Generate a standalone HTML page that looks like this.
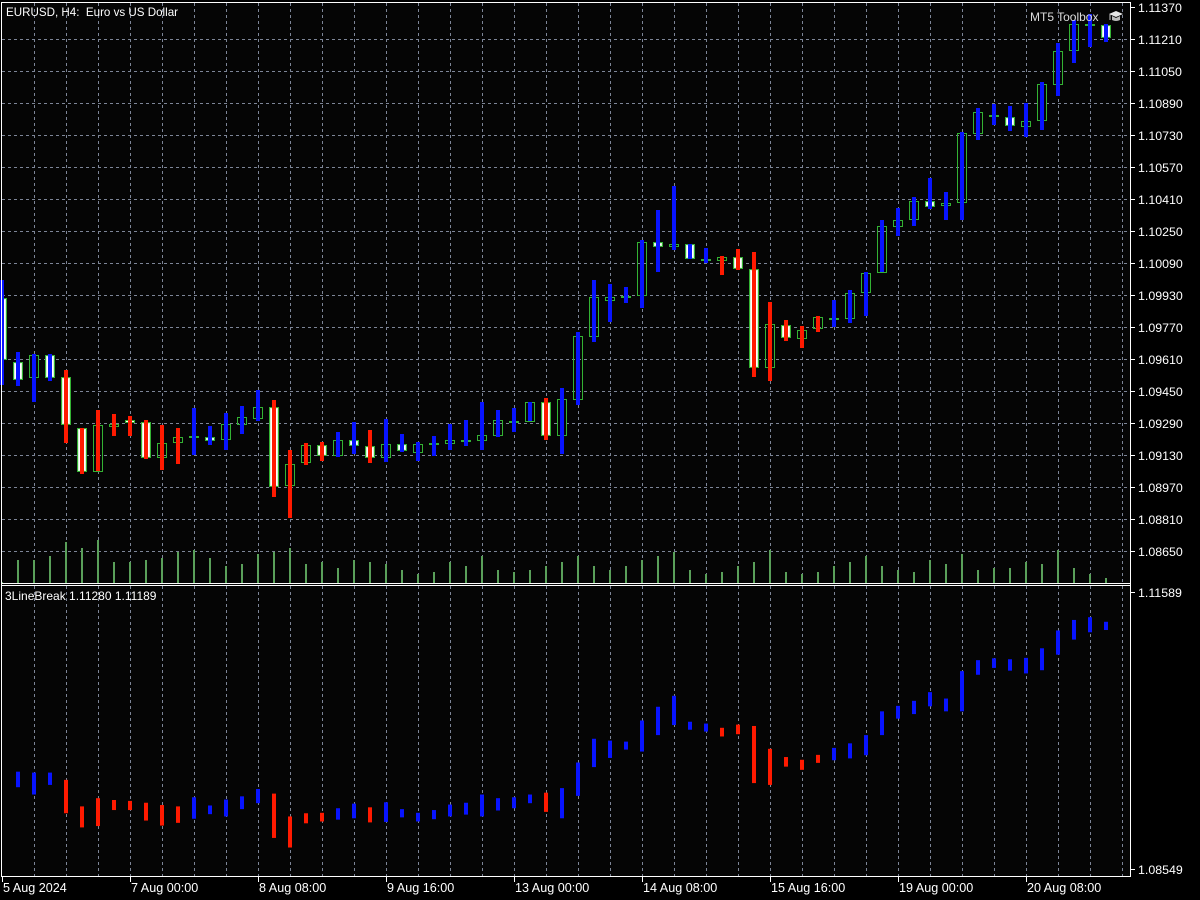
<!DOCTYPE html>
<html><head><meta charset="utf-8"><style>
html,body{margin:0;padding:0;background:#000;width:1200px;height:900px;overflow:hidden}
svg{display:block}
text{font-family:"Liberation Sans","DejaVu Sans",sans-serif;font-size:12px;fill:#fff}
</style></head><body>
<svg id="s" width="1200" height="900" viewBox="0 0 1200 900" xmlns="http://www.w3.org/2000/svg">
<rect width="1200" height="900" fill="#000"/>
<rect x="1" y="2" width="1129" height="874" fill="#050505"/>
<g id="grid"></g>
<g id="vol"></g>
<g id="cand"></g>
<g id="low"></g>
<path d="M1.5 2.5H1130.5V876.5H1.5Z" fill="none" stroke="#fff" stroke-width="1"/>
<path d="M1 583.5H1130M1 585.5H1130" stroke="#fff" stroke-width="1"/>
<g id="axis"></g>
<text x="6" y="16" style="font-size:11.6px">EURUSD, H4:&#160; Euro vs US Dollar</text>
<text x="1030" y="21" style="fill:#ddd">MT5 Toolbox</text>
<g transform="translate(1107,8)">
<path d="M2 6 L9 3 L16 6 L9 9 Z" fill="#e8e8e8"/>
<path d="M5 8 V12 Q9 14 13 12 V8 L9 10 Z" fill="#bdbdbd"/>
<path d="M3 6.5 V12" stroke="#ccc" stroke-width="1"/>
</g>
<text x="5" y="600">3LineBreak 1.11280 1.11189</text>
</svg>
<script>
var NS="http://www.w3.org/2000/svg";
function el(p,t,a,txt){var e=document.createElementNS(NS,t);for(var k in a)e.setAttribute(k,a[k]);if(txt)e.textContent=txt;document.getElementById(p).appendChild(e);return e;}
for(var m=1;m<=35;m++){var x=2+32*m+0.5;
 el('grid','line',{x1:x,y1:3,x2:x,y2:583,stroke:'#7d8597','stroke-dasharray':'3,3','stroke-width':1});
 el('grid','line',{x1:x,y1:586,x2:x,y2:876,stroke:'#7d8597','stroke-dasharray':'3,3','stroke-width':1});}
for(var n=1;n<=17;n++){var y=7+32*n+0.5;
 el('grid','line',{x1:2,y1:y,x2:1130,y2:y,stroke:'#7d8597','stroke-dasharray':'3,3','stroke-width':1});}
for(var n=0;n<=17;n++){var y=7+32*n;var p=(1.11370-0.0016*n).toFixed(5);
 el('axis','line',{x1:1130,y1:y+0.5,x2:1135,y2:y+0.5,stroke:'#fff'});
 el('axis','text',{x:1138,y:y+5,style:'font-size:12.4px'},p);}
el('axis','line',{x1:1130,y1:592.5,x2:1135,y2:592.5,stroke:'#fff'});
el('axis','text',{x:1138,y:597,style:'font-size:12.4px'},'1.11589');
el('axis','line',{x1:1130,y1:869.5,x2:1135,y2:869.5,stroke:'#fff'});
el('axis','text',{x:1138,y:874,style:'font-size:12.4px'},'1.08549');
var dl=[[2,'5 Aug 2024'],[130,'7 Aug 00:00'],[258,'8 Aug 08:00'],[386,'9 Aug 16:00'],[514,'13 Aug 00:00'],[642,'14 Aug 08:00'],[770,'15 Aug 16:00'],[898,'19 Aug 00:00'],[1026,'20 Aug 08:00']];
dl.forEach(function(d){el('axis','line',{x1:d[0]+0.5,y1:876,x2:d[0]+0.5,y2:882,stroke:'#fff'});el('axis','text',{x:d[0]+1,y:892,style:'font-size:12.6px'},d[1]);});
var D=[
[298,360,'w',280,385,'b',582],
[362,380,'w',352,386,'b',560],
[355,378,'h',354,402,'b',560],
[355,378,'w',354,381,'b',556],
[377,425,'w',370,443,'r',542],
[428,472,'w',428,474,'r',548],
[425,472,'h',410,471,'r',540],
[424,427,'h',414,436,'r',562],
[420,423,'w',416,436,'r',562],
[422,458,'w',420,459,'r',560],
[443,458,'h',425,470,'r',558],
[437,443,'h',428,464,'r',552],
[437,437,'d',408,455,'b',550],
[437,441,'w',426,445,'b',558],
[424,440,'h',413,450,'b',566],
[417,425,'h',406,434,'b',564],
[407,419,'h',390,421,'b',554],
[407,487,'w',400,497,'r',552],
[464,486,'h',450,518,'r',548],
[445,463,'h',443,465,'r',564],
[445,456,'w',442,461,'r',562],
[440,456,'h',432,457,'b',568],
[440,446,'w',422,454,'b',560],
[446,458,'w',430,463,'r',562],
[444,458,'h',419,462,'b',564],
[444,451,'w',434,452,'b',570],
[444,453,'h',442,461,'b',574],
[444,444,'d',436,456,'b',572],
[440,444,'h',424,450,'b',562],
[441,441,'d',420,446,'b',566],
[435,441,'h',402,450,'b',556],
[420,436,'h',410,437,'b',570],
[422,422,'d',408,432,'b',572],
[402,422,'h',402,421,'b',570],
[402,436,'w',398,440,'r',566],
[399,436,'h',388,454,'b',562],
[336,400,'h',332,405,'b',556],
[297,337,'h',280,342,'b',566],
[297,301,'h',284,322,'b',570],
[296,298,'h',287,303,'b',566],
[242,296,'h',240,308,'b',560],
[242,247,'w',210,272,'b',556],
[244,247,'h',186,250,'b',552],
[244,259,'w',244,259,'b',570],
[259,261,'h',248,263,'b',574],
[257,261,'h',256,275,'r',572],
[257,269,'w',249,270,'r',566],
[269,368,'w',252,377,'r',562],
[324,368,'h',302,381,'r',550],
[325,338,'w',320,341,'r',572],
[330,339,'h',326,348,'r',574],
[317,329,'h',316,332,'r',572],
[318,320,'h',300,327,'b',566],
[293,319,'h',290,323,'b',562],
[273,293,'h',272,316,'b',556],
[226,273,'h',220,272,'b',566],
[220,227,'h',208,236,'b',570],
[201,220,'h',197,226,'b',572],
[201,207,'w',178,209,'b',560],
[203,206,'h',192,220,'b',564],
[133,203,'h',132,220,'b',554],
[112,134,'h',108,140,'b',570],
[115,117,'h',104,125,'b',568],
[117,126,'w',106,131,'b',568],
[121,127,'h',103,137,'b',562],
[84,121,'h',82,130,'b',564],
[51,85,'h',43,96,'b',550],
[24,51,'h',20,63,'b',568],
[25,25,'d',14,47,'b',574],
[25,38,'w',24,42,'b',578]];
var BL='#0814ff',RD='#ff1a00',GR='#33b233';
D.forEach(function(d,k){
 var x=2+16*k;
 el('vol','rect',{x:x-1,y:d[6],width:2,height:583-d[6],fill:'#5aa05a'});
 var t=d[0],b=d[1];
 if(d[2]==='d'){el('cand','rect',{x:x-5,y:t-1,width:10,height:2,fill:GR});}
 else{
  var h=Math.max(b-t,2);
  el('cand','rect',{x:x-4.5,y:t+0.5,width:9,height:h-1,fill:d[2]==='w'?'#fff':'none',stroke:GR,'stroke-width':1});
  if(d[2]==='w')el('cand','rect',{x:x-3.5,y:t+1.5,width:7,height:Math.max(h-3,0),fill:'none',stroke:'#bfeabf','stroke-width':0.6});
 }
 var c=d[5]==='b'?BL:RD;
 el('cand','rect',{x:x-2,y:d[3],width:4,height:d[4]-d[3],fill:c});
 if(k===0)return;
 var ly1=614+(d[3]-7)*0.457, ly2=614+(d[4]-7)*0.457;
 if(ly2-ly1<8){var mid=(ly1+ly2)/2;ly1=mid-4;ly2=mid+4;}
 el('low','rect',{x:x-2,y:ly1,width:4,height:ly2-ly1,fill:c});
});
</script>
</body></html>
